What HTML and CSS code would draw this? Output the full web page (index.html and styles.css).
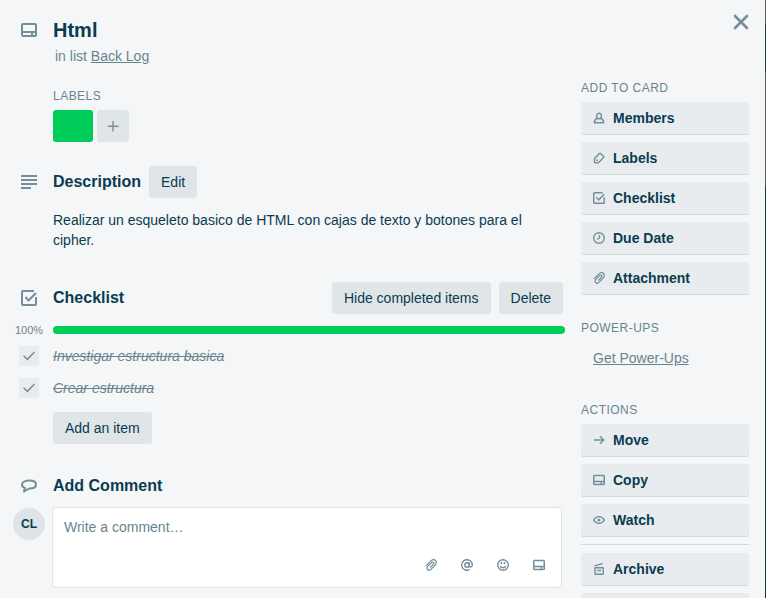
FILE: index.html
```html
<!DOCTYPE html>
<html lang="es">
<head>
<meta charset="utf-8">
<meta name="viewport" content="width=device-width, initial-scale=1">
<title>Html</title>
<link rel="stylesheet" href="styles.css">
</head>
<body>
<svg class="sprite" aria-hidden="true">
  <symbol id="card" viewBox="0 0 16 14"><path fill-rule="evenodd" d="M2 0h12a2 2 0 0 1 2 2v10a2 2 0 0 1-2 2H2a2 2 0 0 1-2-2V2a2 2 0 0 1 2-2zM2 2v6h12V2zM2 10v2h8v-2zM12 10v2h2v-2z"/></symbol>
  <symbol id="lines" viewBox="0 0 16 14"><path d="M0 0h16v2H0zM0 4h16v2H0zM0 8h16v2H0zM0 12h10v2H0z"/></symbol>
  <symbol id="check" viewBox="0 0 16 16"><path class="stroke" d="M13 1H2a1 1 0 0 0-1 1v12a1 1 0 0 0 1 1h12a1 1 0 0 0 1-1V7M4.500 7l3 3.500L15 3"/></symbol>
  <symbol id="bubble" viewBox="0 0 16 14"><path class="stroke" d="M8.500 1.500C12.500 1.500 15 3 15 5.500S12.500 9.500 8.500 9.500C6.500 10 5 11.500 3 12.500L4 9C2 8.500 1 7.500 1 5.500 1 3 4.500 1.500 8.500 1.500z"/></symbol>
  <symbol id="person" viewBox="0 0 12 12"><path class="thin" d="M6 1.200a2.400 2.400 0 0 1 2.400 2.500C8.400 5.400 7.300 6.700 6 6.700S3.600 5.400 3.600 3.700A2.400 2.400 0 0 1 6 1.200zM4 6.500C2.200 7 1.400 8.200 1.400 10.700h9.200C10.600 8.200 9.800 7 8 6.500"/></symbol>
  <symbol id="tag" viewBox="0 0 12 12"><path class="thin" d="M1.600 6.600 6.400 1.500q.6-.6 1.200 0l3 3q.5.500 0 1L5.800 10.500q-.4.400-1 .4l-2.600-.2q-.7 0-.8-.8V7.300q0-.4.200-.7z"/><circle cx="4" cy="8.200" r="1"/></symbol>
  <symbol id="clock" viewBox="0 0 12 12"><circle class="thin" cx="6" cy="6" r="5.300"/><path class="thin" d="M6.500 2.800V6L4.300 7.300"/></symbol>
  <symbol id="clip" viewBox="0 0 12 12"><path class="wire" d="M.8 7.200 5.500 2.300C7.200.5 9.200.3 10.500 1.500s1.100 3.200-.6 4.900L6.200 10.200c-1.200 1.200-2.600 1.300-3.500.4s-.8-2.200.4-3.400L6.500 3.700c.8-.8 1.600-.8 2.100-.3s.5 1.300-.3 2.100L5.200 8.600"/></symbol>
  <symbol id="arrow" viewBox="0 0 12 12"><path class="thin" d="M1 6h10M7 2.300 10.700 6 7 9.700"/></symbol>
  <symbol id="eye" viewBox="0 0 12 12"><path class="thin" d="M.7 6C2 3.600 3.800 2.600 6 2.600S10 3.600 11.300 6C10 8.400 8.200 9.400 6 9.400S2 8.400.7 6z"/><circle cx="6" cy="6" r="1.500"/></symbol>
  <symbol id="archive" viewBox="0 0 12 12"><path class="thin" d="M2 4.700h8.200v6.600H2zM1.500 2.900 9.800.6M4.200 7.500h3.800"/></symbol>
  <symbol id="at" viewBox="0 0 12 12"><circle class="thin" cx="6" cy="6" r="2.200"/><path class="thin" d="M8.200 3.500v3.300c0 1.800 3.100 1.700 3.100-.8a5.300 5.300 0 1 0-2.500 4.500"/></symbol>
  <symbol id="smile" viewBox="0 0 12 12"><circle class="thin" cx="6" cy="6" r="5.300"/><path class="thin" d="M4.500 3v2.300M7.500 3v2.300M3.300 7c.8 2.300 4.600 2.300 5.400 0"/></symbol>
  <symbol id="plus" viewBox="0 0 12 12"><path class="thin" d="M6 1v10.500M1 6.300h10.500"/></symbol>
  <symbol id="close" viewBox="0 0 16 16"><path class="heavy" d="m2 2 12 12M14 2 2 14"/></symbol>
</svg>

<div class="window">
  <main class="main">
    <header class="row header">
      <svg class="icon icon-card"><use href="#card"/></svg>
      <div>
        <h1>Html</h1>
        <p class="list-name">in list <a href="#">Back Log</a></p>
      </div>
    </header>

    <section class="row labels">
      <div class="content">
        <h3>Labels</h3>
        <div class="chips">
          <button class="chip" type="button" aria-label="Green label"></button>
          <button class="btn chip-add" type="button" aria-label="Add label"><svg class="icon-sm"><use href="#plus"/></svg></button>
        </div>
      </div>
    </section>

    <section class="description">
      <div class="row">
        <svg class="icon icon-card"><use href="#lines"/></svg>
        <div class="bar"><h2>Description</h2><button class="btn" type="button">Edit</button></div>
      </div>
      <div class="row"><p class="content text">Realizar un esqueleto basico de HTML con cajas de texto y botones para el cipher.</p></div>
    </section>

    <section class="checklist">
      <div class="row">
        <svg class="icon"><use href="#check"/></svg>
        <div class="bar checklist-bar">
          <h2>Checklist</h2>
          <button class="btn push" type="button">Hide completed items</button>
          <button class="btn" type="button">Delete</button>
        </div>
      </div>
      <div class="row progress-row">
        <label for="progress">100%</label>
        <progress id="progress" value="100" max="100"></progress>
      </div>
      <div class="row item">
        <input type="checkbox" id="item-1" checked>
        <label for="item-1">Investigar estructura basica</label>
      </div>
      <div class="row item">
        <input type="checkbox" id="item-2" checked>
        <label for="item-2">Crear estructura</label>
      </div>
      <div class="row add-item"><button class="btn content" type="button">Add an item</button></div>
    </section>

    <section class="comments">
      <div class="row">
        <svg class="icon icon-card"><use href="#bubble"/></svg>
        <h2>Add Comment</h2>
      </div>
      <div class="row comment">
        <span class="avatar">CL</span>
        <form class="comment-box">
          <textarea aria-label="Write a comment" placeholder="Write a comment…"></textarea>
          <div class="tools">
            <button type="button" aria-label="Attach"><svg class="icon-sm"><use href="#clip"/></svg></button>
            <button type="button" aria-label="Mention"><svg class="icon-sm"><use href="#at"/></svg></button>
            <button type="button" aria-label="Emoji"><svg class="icon-sm"><use href="#smile"/></svg></button>
            <button type="button" aria-label="Add card"><svg class="icon-sm"><use href="#card"/></svg></button>
          </div>
        </form>
      </div>
    </section>
  </main>

  <aside class="sidebar">
    <button class="close" type="button" aria-label="Close"><svg class="icon"><use href="#close"/></svg></button>
    <section>
      <h3>Add to card</h3>
      <div class="stack">
        <button class="side-btn" type="button"><svg class="icon-sm"><use href="#person"/></svg>Members</button>
        <button class="side-btn" type="button"><svg class="icon-sm"><use href="#tag"/></svg>Labels</button>
        <button class="side-btn" type="button"><svg class="icon-sm"><use href="#check"/></svg>Checklist</button>
        <button class="side-btn" type="button"><svg class="icon-sm"><use href="#clock"/></svg>Due Date</button>
        <button class="side-btn" type="button"><svg class="icon-sm"><use href="#clip"/></svg>Attachment</button>
      </div>
    </section>
    <section>
      <h3>Power-Ups</h3>
      <a class="power-link" href="#">Get Power-Ups</a>
    </section>
    <section>
      <h3>Actions</h3>
      <div class="stack">
        <button class="side-btn" type="button"><svg class="icon-sm"><use href="#arrow"/></svg>Move</button>
        <button class="side-btn" type="button"><svg class="icon-sm"><use href="#card"/></svg>Copy</button>
        <button class="side-btn" type="button"><svg class="icon-sm"><use href="#eye"/></svg>Watch</button>
        <hr>
        <button class="side-btn" type="button"><svg class="icon-sm"><use href="#archive"/></svg>Archive</button>
        <button class="side-btn" type="button" aria-label="Share"></button>
      </div>
    </section>
  </aside>
</div>
</body>
</html>
```
FILE: styles.css
```css
:root {
  --ink: #093c50;
  --muted: #6a848f;
  --icon: #738f9b;
  --surface: #f5f6f8;
  --button: #e0e6e8;
  --side: #e8ecee;
  --line: #cfdadd;
  --green: #00cc5a;
}

* { box-sizing: border-box; }

body {
  margin: 0;
  height: 100vh;
  overflow: hidden;
  background: linear-gradient(#5f584f 24px, #004d2d 24px 72px, #5b5a57 72px 187px, #00432a 187px);
  color: var(--ink);
  font: 14px/20px "Liberation Sans", Arial, sans-serif;
}

h1, h2, h3, p { margin: 0; }
h1 { font-size: 20px; line-height: 24px; }
h2 { font-size: 16px; line-height: 20px; }
h3 {
  color: var(--muted);
  font-size: 12px;
  font-weight: 400;
  line-height: 20px;
  letter-spacing: 0.04em;
  text-transform: uppercase;
}
a { color: var(--muted); }
button { font: inherit; color: inherit; border: 0; padding: 0; cursor: pointer; }

.sprite { position: absolute; width: 0; height: 0; }
svg { fill: var(--icon); }
.stroke, .thin, .wire, .heavy {
  fill: none;
  stroke: var(--icon);
  stroke-width: 2;
  stroke-linejoin: round;
}
.thin { stroke-width: 1.4; }
.wire { stroke-width: 1.2; }
.heavy { stroke-width: 2.6; stroke-linecap: round; }
.icon { width: 16px; height: 16px; }
.icon-card { height: 14px; }
.icon-sm { width: 12px; height: 12px; flex: none; }

.window {
  display: flex;
  gap: 16px;
  min-height: 100%;
  margin-right: 1px;
  padding: 0 16px 0 13px;
  background: var(--surface);
}
.main { flex: 1; min-width: 0; padding-top: 18px; }

.row {
  display: grid;
  grid-template-columns: 32px 1fr;
  column-gap: 8px;
  align-items: center;
}
.row > .icon { justify-self: center; }
.content { grid-column: 2; }

.header { align-items: start; }
.header .icon { margin-top: 5px; }
.list-name { margin: 4px 2px 0; color: var(--muted); }

.labels { margin-top: 20px; }
.chips { display: flex; gap: 4px; margin-top: 4px; }
.chip { width: 40px; height: 32px; border-radius: 3px; background: var(--green); }

.btn {
  height: 32px;
  padding: 0 12px;
  border-radius: 3px;
  background: var(--button);
}
.chip-add { display: grid; place-items: center; width: 32px; padding: 0; }

.bar { display: flex; align-items: center; gap: 8px; }
.push { margin-left: auto; }

.description { margin-top: 24px; }
.text { margin-top: 12px; }

.checklist { margin-top: 32px; }
.checklist-bar { padding-right: 2px; }
.progress-row { margin-top: 6px; }
.progress-row label {
  color: var(--muted);
  font-size: 11px;
  text-align: center;
}
progress {
  appearance: none;
  display: block;
  width: 100%;
  height: 8px;
  border: 0;
}
progress::-webkit-progress-bar { background: var(--button); border-radius: 4px; }
progress::-webkit-progress-value { background: var(--green); border-radius: 4px; }

.item { height: 32px; }
.item input {
  appearance: none;
  display: grid;
  place-items: center;
  justify-self: center;
  width: 20px;
  height: 20px;
  margin: 0;
  border-radius: 3px;
  background: var(--side);
}
.item input:checked::before {
  content: "";
  width: 12px;
  height: 10px;
  background: var(--icon);
  clip-path: polygon(0 52%, 9% 42%, 36% 72%, 92% 6%, 100% 16%, 37% 94%);
}
.item input:checked + label {
  color: var(--muted);
  font-style: italic;
  text-decoration: line-through;
}
.add-item { margin-top: 8px; justify-items: start; }

.comments { margin-top: 32px; }
.comment { align-items: start; margin-top: 12px; padding-right: 4px; }
.avatar {
  display: grid;
  place-items: center;
  width: 32px;
  height: 32px;
  border-radius: 50%;
  background: #dde3e6;
  font-size: 12px;
  font-weight: 700;
}
.comment-box {
  border-radius: 3px;
  background: #fff;
  box-shadow: 0 0 0 1px #dfe5e7, 0 1px 0 #cbd9d8;
}
textarea {
  display: block;
  width: 100%;
  height: 41px;
  padding: 9px 11px;
  border: 0;
  background: none;
  resize: none;
  color: inherit;
  font: inherit;
}
textarea::placeholder { color: var(--muted); }
.tools {
  display: flex;
  justify-content: flex-end;
  gap: 4px;
  padding: 0 6px 6px;
}
.tools button {
  display: grid;
  place-items: center;
  width: 32px;
  height: 32px;
  background: none;
}

.sidebar { display: flex; flex-direction: column; width: 168px; padding-top: 14px; }
.close { align-self: flex-end; width: 16px; height: 16px; background: none; }
.close .icon { display: block; }
.sidebar section { margin-bottom: 24px; }
.close + section { margin-top: 48px; }
.stack { display: flex; flex-direction: column; gap: 8px; margin-top: 4px; }
.side-btn {
  display: flex;
  align-items: center;
  gap: 8px;
  height: 32px;
  padding: 0 12px;
  border-radius: 3px;
  background: var(--side);
  box-shadow: 0 1px 0 var(--line);
  font-weight: 700;
}
.power-link { display: block; margin-top: 4px; padding: 6px 12px 8px; }
hr { width: 100%; height: 1px; margin: 0; border: 0; background: var(--line); }
```
